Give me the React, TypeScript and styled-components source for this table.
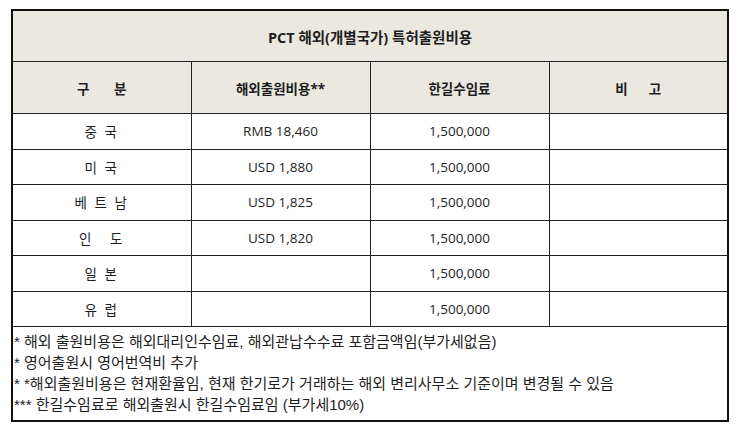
import styled, { createGlobalStyle } from "styled-components"

const GlobalStyle = createGlobalStyle`
  html, body {
    margin: 0;
    padding: 0;
    background: #ffffff;
  }
`

const Page = styled.div`
  padding: 9px 0 0 11px;
  font-family: "Open Sans", "Noto Sans CJK KR", sans-serif;
  color: #1e1e1e;
`

const Table = styled.table`
  width: 718px;
  border-collapse: collapse;
  table-layout: fixed;
  border: 2px solid #111;
`

const TitleCell = styled.th`
  height: 50px;
  background: #ebe8df;
  border: 1px solid #222;
  font-size: 14.5px;
  font-weight: 700;
  text-align: center;
  padding: 0;
`

const HeadCell = styled.th`
  height: 51px;
  background: #ebe8df;
  border: 1px solid #222;
  font-size: 13.5px;
  font-weight: 700;
  text-align: center;
  white-space: pre;
  padding: 0;
`

const Cell = styled.td<{ spaced?: boolean }>`
  height: 34.5px;
  border: 1px solid #222;
  font-size: 13.5px;
  text-align: center;
  white-space: pre;
  letter-spacing: ${(props) => (props.spaced ? "2px" : "0")};
  padding: 0;
`

const NoteCell = styled.td`
  border: 1px solid #222;
  padding: 4px 0 5px 1px;
  text-align: left;
`

const NoteLine = styled.div`
  height: 21px;
  line-height: 21px;
  font-size: 15px;
  font-family: "Liberation Sans", "Noto Sans CJK KR", sans-serif;
  white-space: pre;
`

const rows = [
  { name: "중 국", cost: "RMB 18,460", fee: "1,500,000" },
  { name: "미 국", cost: "USD 1,880", fee: "1,500,000" },
  { name: "베 트 남", cost: "USD 1,825", fee: "1,500,000" },
  { name: "인   도", cost: "USD 1,820", fee: "1,500,000" },
  { name: "일 본", cost: "", fee: "1,500,000" },
  { name: "유 럽", cost: "", fee: "1,500,000" },
]

const notes = [
  "* 해외 출원비용은 해외대리인수임료, 해외관납수수료 포함금액임(부가세없음)",
  "* 영어출원시 영어번역비 추가",
  "* *해외출원비용은 현재환율임, 현재 한기로가 거래하는 해외 변리사무소 기준이며 변경될 수 있음",
  "*** 한길수임료로 해외출원시 한길수임료임 (부가세10%)",
]

const App = () => {
  return (
    <Page>
      <GlobalStyle />
      <Table>
        <thead>
          <tr>
            <TitleCell colSpan={4}>PCT 해외(개별국가) 특허출원비용</TitleCell>
          </tr>
          <tr>
            <HeadCell>{"구       분"}</HeadCell>
            <HeadCell>해외출원비용**</HeadCell>
            <HeadCell>한길수임료</HeadCell>
            <HeadCell>{"비      고"}</HeadCell>
          </tr>
        </thead>
        <tbody>
          {rows.map((row) => (
            <tr key={row.name}>
              <Cell spaced>{row.name}</Cell>
              <Cell>{row.cost}</Cell>
              <Cell>{row.fee}</Cell>
              <Cell />
            </tr>
          ))}
          <tr>
            <NoteCell colSpan={4}>
              {notes.map((note) => (
                <NoteLine key={note}>{note}</NoteLine>
              ))}
            </NoteCell>
          </tr>
        </tbody>
      </Table>
    </Page>
  )
}

export default App
